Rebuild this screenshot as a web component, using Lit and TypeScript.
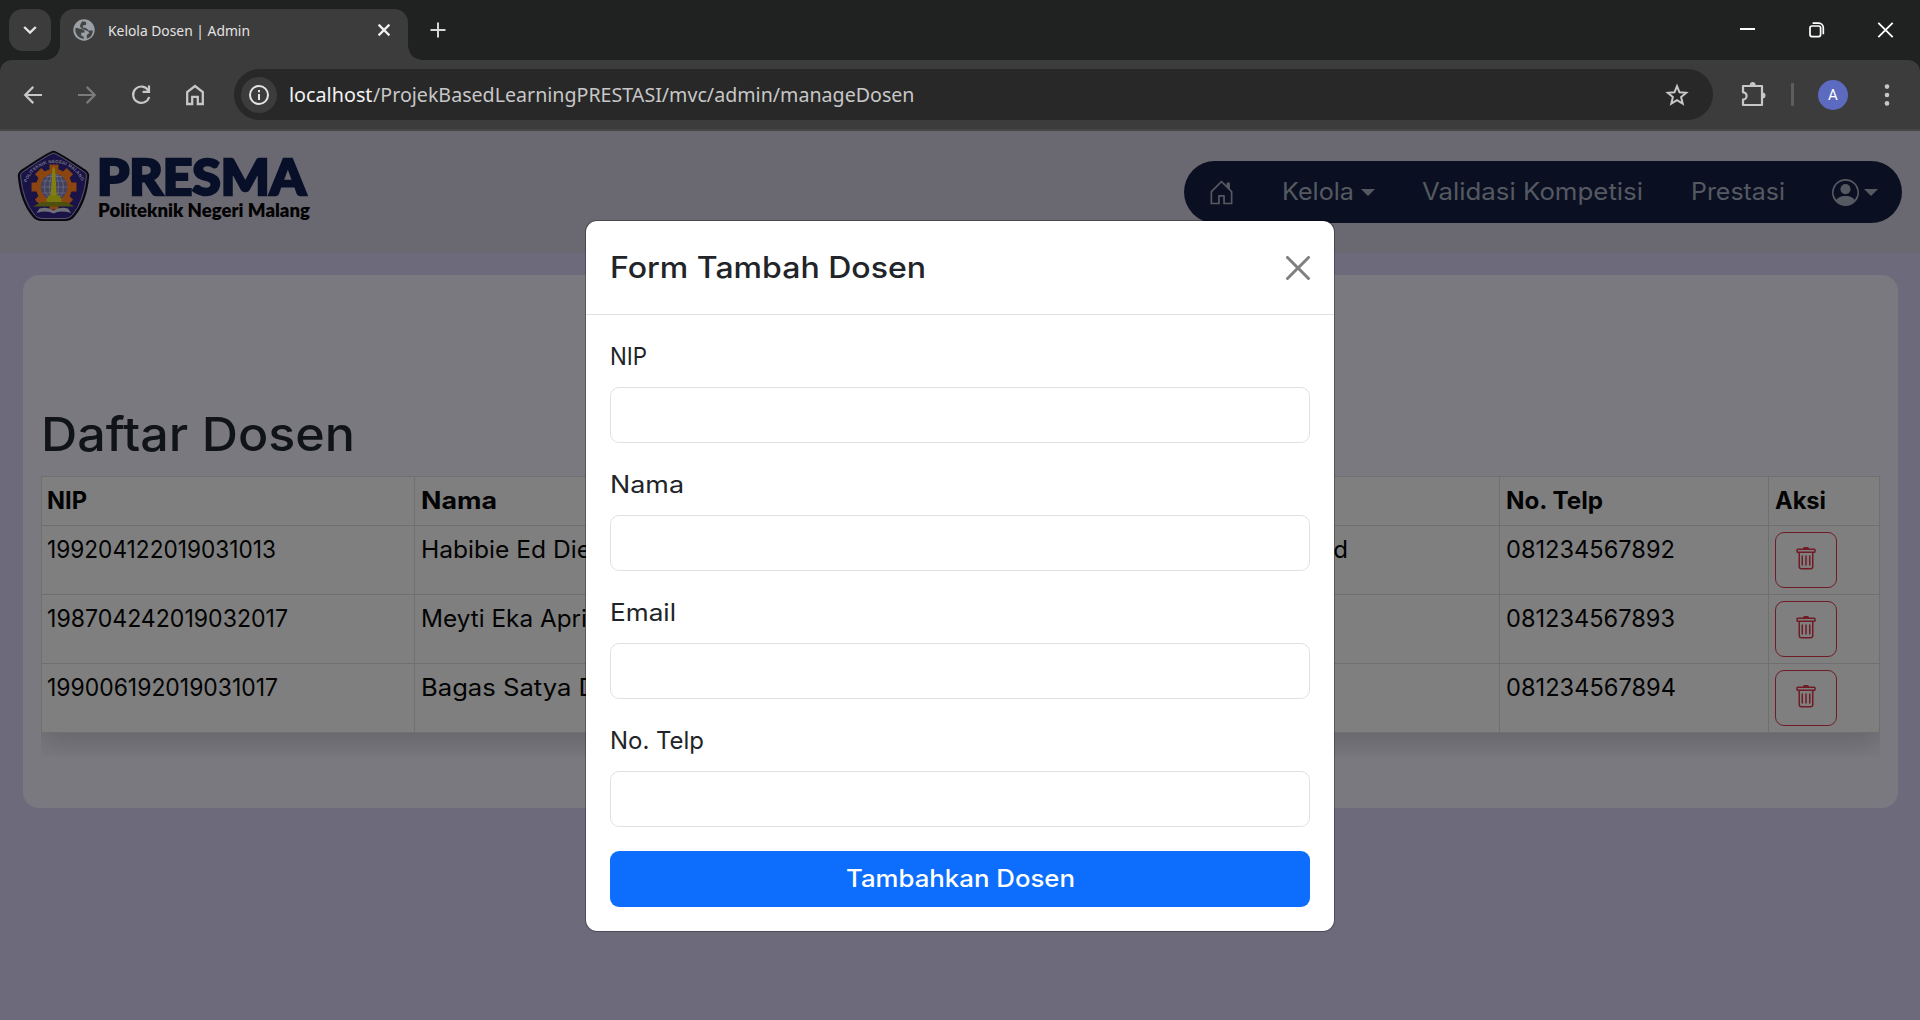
import { LitElement, html, css, svg } from "lit";
import { customElement, property } from "lit/decorators.js";

/** One line of text, its glyphs widened or narrowed to span a given width. */
@customElement("fit-text")
class FitText extends LitElement {
  @property() text = "";
  @property({ type: Number }) span = 0;

  static styles = css`
    :host { display: inline-block; white-space: pre; flex: none; text-align: left; }
    span { display: inline-block; transform-origin: 0 50%; }
  `;

  render() {
    return html`<span>${this.text}</span>`;
  }

  firstUpdated() {
    const el = this.renderRoot.querySelector("span") as HTMLElement;
    const natural = el.getBoundingClientRect().width;
    this.style.width = `${this.span}px`;
    el.style.transform = `scaleX(${this.span / natural})`;
  }
}

const fit = (text: string, span: number) => html`<fit-text .text=${text} .span=${span}></fit-text>`;

@customElement("browser-bar")
class BrowserBar extends LitElement {
  static styles = css`
    :host { display: block; height: 131px; font-family: "Noto Sans", "Open Sans", sans-serif; color: #e3e3e3; background: #202221; }
    svg { display: block; flex: none; }
    .tabs { display: flex; height: 60px; box-sizing: border-box; padding: 9px 0 0 9px; }
    .search { width: 42px; height: 42px; border-radius: 14px; background: #3c3c3c; display: grid; place-items: center; }
    .tab { position: relative; width: 348px; height: 51px; margin-left: 9px; box-sizing: border-box; padding: 0 16px 9px 13px; border-radius: 14px 14px 0 0; background: #3c3c3c; display: flex; align-items: center; }
    .tab::before, .tab::after { content: ""; position: absolute; bottom: 0; width: 14px; height: 14px; }
    .tab::before { left: -14px; background: radial-gradient(circle at 0 0, transparent 13.5px, #3c3c3c 14px); }
    .tab::after { right: -14px; background: radial-gradient(circle at 100% 0, transparent 13.5px, #3c3c3c 14px); }
    .title { font-size: 14.6px; line-height: 20px; margin-left: 13px; flex: 1; }
    .plus { margin: 13px 0 0 22px; }
    .controls { margin-left: auto; display: flex; gap: 52px; padding: 12px 26px 0 0; }
    .tools { display: flex; align-items: center; height: 69px; box-sizing: border-box; padding: 0 18px 0 18px; background: #3c3c3c; border-radius: 12px 12px 0 0; color: #c7c7c7; }
    .nav { display: flex; gap: 24px; }
    .url { display: flex; align-items: center; width: 1479px; height: 51px; margin-left: 24px; box-sizing: border-box; padding: 0 21px 0 7px; border-radius: 26px; background: #282828; font-size: 20.5px; line-height: 28px; }
    .info { width: 36px; height: 36px; border-radius: 50%; background: #3c3c3c; display: grid; place-items: center; margin-right: 12px; }
    .host { color: #f2f2f2; padding-bottom: 2px; }
    .path { flex: 1; padding-bottom: 2px; }
    .ext { margin-left: 25px; }
    .bar { width: 3px; height: 23px; background: #5e5e5e; margin-left: 23px; border-radius: 1px; }
    .me { width: 30px; height: 30px; border-radius: 50%; background: #5c6bc0; color: #fff; font: 15px/30px Roboto, sans-serif; text-align: center; margin-left: 24px; }
    .dots { margin-left: 34px; }
    .edge { height: 2px; background: #474747; }
  `;

  render() {
    return html`
      <div class="tabs">
        <div class="search"><svg width="14" height="10" viewBox="0 0 14 10" fill="none" stroke="#e3e3e3" stroke-width="2.4"><path d="M1.2 2 7 7.6 12.8 2"/></svg></div>
        <div class="tab">
          <svg width="22" height="22" viewBox="0 0 22 22"><circle cx="11" cy="11" r="10.7" fill="#9aa0a6"/><path d="M2.6 8.8 9.2 10.2q2.6.6 2.4 3.2l-3.4.3v3.1l2.4.6.3 2.3A8.9 8.9 0 0 1 2.6 8.8ZM9.2 2.3l4 .6-.3 3-2.6.3-.7 2.2 3.4.6 2.6 2.6 4.3-.2a9 9 0 0 1-6 8.3l-.2-3.7 2.4-1.8-.3-1.5-3.2-1.5-4-1.7L7 7.6l.4-2.4Z" fill="#3c3c3c" fill-opacity=".92"/></svg>
          <div class="title">${fit("Kelola Dosen | Admin", 142)}</div>
          <svg width="16" height="16" viewBox="0 0 16 16" stroke="#f0f0f0" stroke-width="2.2"><path d="M2.6 2.6 13.4 13.4M13.4 2.6 2.6 13.4"/></svg>
        </div>
        <svg class="plus" width="16" height="16" viewBox="0 0 16 16" stroke="#d6d6d6" stroke-width="2"><path d="M8 .5v15M.5 8h15"/></svg>
        <div class="controls">
          <svg width="17" height="17" viewBox="0 0 17 17" stroke="#fff" stroke-width="2"><path d="M1 8h15"/></svg>
          <svg width="17" height="18" viewBox="0 0 17 18" fill="none" stroke="#fff" stroke-width="1.7"><rect x="2" y="5" width="10.6" height="10.6" rx="2"/><path d="M4.6 2.2h6.2A4.6 4.6 0 0 1 15.3 6.8v6.4"/></svg>
          <svg width="17" height="18" viewBox="0 0 17 18" stroke="#fff" stroke-width="1.8"><path d="M1.3 1.8 15.7 16.2M15.7 1.8 1.3 16.2"/></svg>
        </div>
      </div>
      <div class="tools">
        <div class="nav">
          <svg width="30" height="30" viewBox="0 0 30 30" fill="none" stroke="currentColor" stroke-width="2.2"><path d="M24 15H7.5M15.3 6.9 7.2 15l8.1 8.1"/></svg>
          <svg width="30" height="30" viewBox="0 0 30 30" fill="none" stroke="#7b7b7b" stroke-width="2.2"><path d="M6 15h16.5M14.7 6.9 22.8 15l-8.1 8.1"/></svg>
          <svg width="30" height="30" viewBox="0 0 30 30" fill="none" stroke="currentColor" stroke-width="2.2"><path d="M22.3 10.4A8.2 8.2 0 1 0 23.2 17M23 5.6v6.2h-6.4"/></svg>
          <svg width="30" height="30" viewBox="0 0 30 30" fill="none" stroke="currentColor" stroke-width="2.3"><path d="M7.2 24V12L15 6l7.8 6v12h-5v-7.2h-5.6V24Z"/></svg>
        </div>
        <div class="url">
          <div class="info"><svg width="22" height="22" viewBox="0 0 22 22" fill="none" stroke="#e3e3e3" stroke-width="2"><circle cx="11" cy="11" r="9"/><path d="M11 10v6M11 6v2.2"/></svg></div>
          <span class="host">${fit("localhost", 83.5)}</span><span class="path">${fit("/ProjekBasedLearningPRESTASI/mvc/admin/manageDosen", 541.5)}</span>
          <svg width="30" height="30" viewBox="0 0 30 30" fill="none" stroke="currentColor" stroke-width="2"><path d="m15 6.2 2.5 6.1 6.7.5-5.1 4.3 1.6 6.5L15 20.1l-5.700 3.5 1.600-6.500-5.100-4.300 6.700-.500Z"/></svg>
        </div>
        <svg class="ext" width="30" height="30" viewBox="0 0 30 30"><path d="M5 6h19v19H5v-5.500a3.600 3.600 0 0 0 0-7.200Z" fill="none" stroke="currentColor" stroke-width="2.200" stroke-linejoin="round"/><path d="M11.700 5.500a3 3.600 0 0 1 6 0ZM24.500 12.500a3 3 0 0 1 0 6Z" fill="currentColor"/></svg>
        <div class="bar"></div>
        <div class="me">A</div>
        <svg class="dots" width="10" height="24" viewBox="0 0 10 24" fill="currentColor"><circle cx="5" cy="3.600" r="2.300"/><circle cx="5" cy="12" r="2.300"/><circle cx="5" cy="20.400" r="2.300"/></svg>
      </div>
      <div class="edge"></div>
    `;
  }
}

const teeth = [-135, -90, -45, 0, 45, 90, 135, 180].map(
  (a) => svg`<rect x="35.500" y="18.500" width="9" height="9" transform="rotate(${a} 40 41)"/>`
);

const crest = html`<svg class="crest" width="80" height="80" viewBox="0 0 80 80">
  <path d="M39.500 5.500Q43 5.500 72 25Q75 27.500 74.300 31Q72 56 60 70Q57 74 51 74.300H28Q22 74 19 70Q7 56 4.700 31Q4 27.500 7 25Q36 5.500 39.500 5.500Z" fill="#141131" stroke="#08080c" stroke-width="1.600"/>
  <path d="M39.500 7.300Q43 7.300 70.700 26.300Q73 28 72.300 31Q70 55 58.300 69Q56 72.300 51 72.500H28Q23 72.300 20.700 69Q9 55 6.700 31Q6 28 8.300 26.300Q36 7.300 39.500 7.300Z" fill="#191347" stroke="#68666d" stroke-width=".8"/>
  <defs><path id="arc" d="M12.500 36.500A29.500 29.500 0 0 1 68 36.500"/></defs>
  <text font-family="Liberation Sans, sans-serif" font-weight="bold" font-size="4.500" letter-spacing=".15" fill="#77757e"><textPath href="#arc">POLITEKNIK NEGERI MALANG</textPath></text>
  <g fill="#8a4511">${teeth}<circle cx="40" cy="41" r="18"/></g>
  <circle cx="40" cy="41" r="13.300" fill="#424160"/>
  <g fill="none" stroke="#77758a" stroke-width=".6"><ellipse cx="40" cy="41" rx="4.500" ry="13"/><ellipse cx="40" cy="41" rx="9.500" ry="13"/><path d="M27 41h26M28.500 35h23M28.500 47h23M32 30.500h16"/></g>
  <path d="M38.300 23 39.600 20.500 41 23 42.700 48.500V54H36.700V48.500Z" fill="#81800f"/>
  <path d="M32.500 52h15v5h-15ZM34 49.500h12V52H34Z" fill="#77770d"/>
  <path d="M28 56h24l8.500 4.500H19Z" fill="#4d500f"/>
  <path d="M25.500 62.500Q34 60.500 39.500 64.500Q45 60.500 54 62.500L57 67Q46 64 39.500 67.500Q33 64 22.500 67Z" fill="#706e78"/>
</svg>`;

@customElement("site-header")
class SiteHeader extends LitElement {
  static styles = css`
    :host { display: flex; height: 122px; box-sizing: border-box; padding: 15px 18px 0 14px; justify-content: space-between; background: #6a6870; }
    svg { display: block; flex: none; }
    .brand { display: flex; }
    .names { margin-left: 3px; display: flex; flex-direction: column; }
    .name { font: 900 50px/50px Lato, sans-serif; color: #081029; -webkit-text-stroke: 2.500px #081029; padding-top: 5px; height: 48px; }
    .school { font: 800 18.500px/22px Lato, sans-serif; color: #030304; padding-left: 1px; }
    nav { display: flex; align-items: center; gap: 46px; height: 62px; width: 718px; box-sizing: border-box; margin-top: 15px; padding: 0 24px; border-radius: 31px; background: #0a1021; color: #555962; font: 24px/36px Inter, sans-serif; }
    .item { display: flex; align-items: center; }
    .item fit-text { margin: 0 1px; }
    .caret { border: 7px solid transparent; border-top-color: currentColor; border-bottom: 0; margin-left: 6px; }
    .user .caret { margin-left: 5px; }
  `;

  render() {
    return html`
      <div class="brand">
        ${crest}
        <div class="names">
          <div class="name">${fit("PRESMA", 209)}</div>
          <div class="school">${fit("Politeknik Negeri Malang", 212)}</div>
        </div>
      </div>
      <nav>
        <div class="item"><svg width="27" height="27" viewBox="0 0 16 16" fill="currentColor"><path d="M8.354 1.146a.5.5 0 0 0-.708 0l-6 6A.5.5 0 0 0 1.5 7.5v7a.5.5 0 0 0 .5.5h4.5a.5.5 0 0 0 .5-.5v-4h2v4a.5.5 0 0 0 .5.5H14a.5.5 0 0 0 .5-.5v-7a.5.5 0 0 0-.146-.354L13 5.793V2.5a.5.5 0 0 0-.5-.5h-1a.5.5 0 0 0-.5.5v1.293zM2.5 14V7.707l5.5-5.500 5.500 5.500V14H10v-4a.5.5 0 0 0-.5-.5h-3a.5.5 0 0 0-.5.5v4z"/></svg></div>
        <div class="item">${fit("Kelola", 72)}<i class="caret"></i></div>
        <div class="item">${fit("Validasi Kompetisi", 221)}</div>
        <div class="item">${fit("Prestasi", 94)}</div>
        <div class="item user"><svg width="27" height="27" viewBox="0 0 16 16" fill="currentColor"><path d="M11 6a3 3 0 1 1-6 0 3 3 0 0 1 6 0"/><path fill-rule="evenodd" d="M0 8a8 8 0 1 1 16 0A8 8 0 0 1 0 8m8-7a7 7 0 0 0-5.468 11.370C3.242 11.226 4.805 10 8 10s4.757 1.225 5.468 2.370A7 7 0 0 0 8 1"/></svg><i class="caret"></i></div>
      </nav>
    `;
  }
}

const rows = [
  { nip: "199204122019031013", nipW: 229, name: "Habibie Ed Die", nameW: 170, email: "d", phone: "081234567892", phoneW: 169 },
  { nip: "198704242019032017", nipW: 241, name: "Meyti Eka Apri", nameW: 166, email: "", phone: "081234567893", phoneW: 169 },
  { nip: "199006192019031017", nipW: 231, name: "Bagas Satya D", nameW: 176, email: "", phone: "081234567894", phoneW: 170 },
];

@customElement("dosen-table")
class DosenTable extends LitElement {
  static styles = css`
    :host { display: block; margin: 22px 22px 0 23px; height: 533px; box-sizing: border-box; padding: 130px 18px 0; border-radius: 16px; background: #7b7980; font-family: Inter, sans-serif; }
    h1 { margin: 0; height: 71px; font-size: 47px; line-height: 57px; font-weight: 450; color: #111416; }
    .clip { overflow: hidden; padding-bottom: 24px; }
    .table { background: #7f7f7f; border: solid #6f6f6f; border-width: 1px 1px 0 0; box-shadow: 0 12px 24px rgba(0, 0, 0, 0.15); font-size: 24px; line-height: 36px; color: #030303; }
    .row { display: grid; grid-template-columns: 373px 560px 525px 269px 1fr; height: 69px; border-bottom: 1px solid #6f6f6f; box-sizing: border-box; }
    .row > div { border-left: 1px solid #6f6f6f; padding: 6px 6px 0; white-space: nowrap; }
    .row > div:first-child { padding-left: 5px; }
    .row > div.email { text-align: right; padding-right: 151px; border-left-color: transparent; }
    .head { height: 49px; font-weight: 650; }
    button { display: block; width: 62px; height: 56px; box-sizing: border-box; border: 1px solid #701c26; border-radius: 9px; background: none; padding: 14px 18px 16px; color: #701c26; }
    svg { display: block; }
  `;

  render() {
    return html`
      <h1>${fit("Daftar Dosen", 314)}</h1>
      <div class="clip">
        <div class="table">
          <div class="row head">
            <div>${fit("NIP", 40)}</div>
            <div>${fit("Nama", 76)}</div>
            <div class="email"></div>
            <div>${fit("No. Telp", 97)}</div>
            <div>${fit("Aksi", 51)}</div>
          </div>
          ${rows.map(
            (r) => html`<div class="row">
              <div>${fit(r.nip, r.nipW)}</div>
              <div>${fit(r.name, r.nameW)}</div>
              <div class="email">${r.email}</div>
              <div>${fit(r.phone, r.phoneW)}</div>
              <div><button aria-label="Hapus"><svg width="24" height="24" viewBox="0 0 16 16" fill="currentColor"><path d="M5.5 5.5A.5.5 0 0 1 6 6v6a.5.5 0 0 1-1 0V6a.5.5 0 0 1 .5-.5m2.5 0a.5.5 0 0 1 .5.5v6a.5.5 0 0 1-1 0V6a.5.5 0 0 1 .5-.5m3 .5a.5.5 0 0 0-1 0v6a.5.5 0 0 0 1 0z"/><path d="M14.5 3a1 1 0 0 1-1 1H13v9a2 2 0 0 1-2 2H5a2 2 0 0 1-2-2V4h-.5a1 1 0 0 1-1-1V2a1 1 0 0 1 1-1H6a1 1 0 0 1 1-1h2a1 1 0 0 1 1 1h3.500a1 1 0 0 1 1 1zM4.118 4 4 4.059V13a1 1 0 0 0 1 1h6a1 1 0 0 0 1-1V4.059L11.882 4zM2.500 3h11V2h-11z"/></svg></button></div>
            </div>`
          )}
        </div>
      </div>
    `;
  }
}

const fields = [
  { label: "NIP", span: 37 },
  { label: "Nama", span: 74 },
  { label: "Email", span: 66 },
  { label: "No. Telp", span: 94 },
];

@customElement("dosen-modal")
class DosenModal extends LitElement {
  static styles = css`
    :host { display: block; width: 748px; border: 1px solid rgba(0, 0, 0, 0.3); background: #fff; background-clip: padding-box; border-radius: 12px; color: #212529; font: 24px/36px Inter, sans-serif; }
    header { display: flex; align-items: center; justify-content: space-between; height: 94px; box-sizing: border-box; padding: 0 24px; border-bottom: 1px solid #dee2e6; }
    h5 { margin: 0; font-size: 29.5px; line-height: 45px; font-weight: 500; }
    form { padding: 24px; display: flex; flex-direction: column; gap: 24px; }
    label { display: flex; flex-direction: column; gap: 12px; }
    input { height: 56px; box-sizing: border-box; border: 1px solid #dee2e6; border-radius: 9px; background: #fff; padding: 0 18px; }
    button { height: 56px; border: 0; border-radius: 9px; background: #0d6efd; color: #fff; font: 500 24px/36px Inter, sans-serif; padding: 0; }
    svg { display: block; }
  `;

  render() {
    return html`
      <header>
        <h5>${fit("Form Tambah Dosen", 316)}</h5>
        <svg width="24" height="24" viewBox="0 0 16 16" fill="#808080"><path d="M.293.293a1 1 0 0 1 1.414 0L8 6.586 14.293.293a1 1 0 1 1 1.414 1.414L9.414 8l6.293 6.293a1 1 0 0 1-1.414 1.414L8 9.414l-6.293 6.293a1 1 0 0 1-1.414-1.414L6.586 8 .293 1.707a1 1 0 0 1 0-1.414z"/></svg>
      </header>
      <form>
        ${fields.map((f) => html`<label>${fit(f.label, f.span)}<input type="text" /></label>`)}
        <button type="button">${fit("Tambahkan Dosen", 229)}</button>
      </form>
    `;
  }
}

@customElement("app-root")
class AppRoot extends LitElement {
  static styles = css`
    :host { display: block; position: relative; width: 1920px; height: 1020px; overflow: hidden; background: #6d6b7b; }
    dosen-modal { position: absolute; left: 585px; top: 220px; }
  `;

  render() {
    return html`
      <browser-bar></browser-bar>
      <site-header></site-header>
      <dosen-table></dosen-table>
      <dosen-modal></dosen-modal>
    `;
  }
}
